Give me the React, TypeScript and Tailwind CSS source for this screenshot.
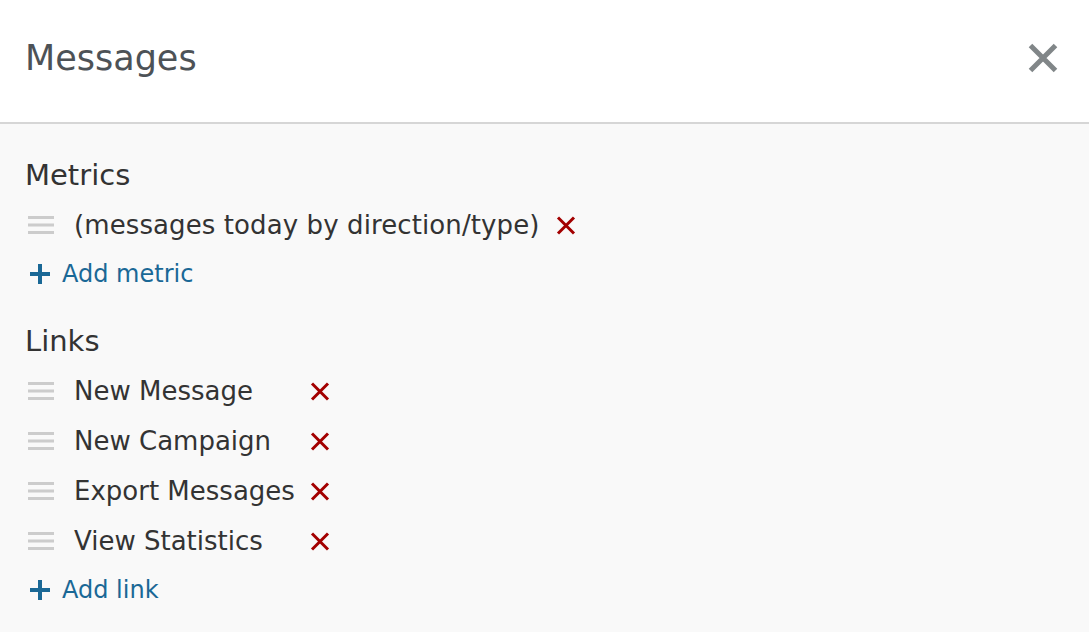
import React from "react";

const font = { fontFamily: '"DejaVu Sans", Verdana, sans-serif' };

function Handle() {
  return (
    <svg width="26" height="18" viewBox="0 0 26 18" className="ml-[3px] shrink-0">
      <rect x="0" y="0" width="26" height="3" fill="#cccccc" />
      <rect x="0" y="7.5" width="26" height="3" fill="#cccccc" />
      <rect x="0" y="15" width="26" height="3" fill="#cccccc" />
    </svg>
  );
}

function RedX() {
  return (
    <svg width="20" height="19" viewBox="0 0 20 19" className="shrink-0">
      <path d="M2 1.5 L18 17.5 M18 1.5 L2 17.5" stroke="#a30000" strokeWidth="3" />
    </svg>
  );
}

function Plus() {
  return (
    <svg width="20" height="20" viewBox="0 0 20 20" className="ml-[5px] shrink-0">
      <path d="M10 0 V20 M0 10 H20" stroke="#1a6896" strokeWidth="4" />
    </svg>
  );
}

function Row({ label, fixed }: { label: string; fixed?: boolean }) {
  return (
    <div className="flex h-[50px] items-center">
      <Handle />
      <span
        className={`ml-[20px] text-[26px] leading-none text-[#333333] ${fixed ? "w-[236px]" : "mr-[17px] tracking-[0.1px]"}`}
      >
        {label}
      </span>
      <RedX />
    </div>
  );
}

function AddRow({ label }: { label: string }) {
  return (
    <div className="flex h-[46px] items-center pt-[2px]">
      <Plus />
      <span className="ml-[12px] text-[24px] leading-none text-[#1a6896]">{label}</span>
    </div>
  );
}

export default function App() {
  return (
    <div className="h-[632px] w-full overflow-hidden bg-[#f9f9f9]" style={font}>
      <div className="flex h-[124px] items-center justify-between border-b-2 border-[#d6d6d6] bg-white pb-[6px] pl-[25px] pr-[31px]">
        <h1 className="text-[35px] font-normal leading-none text-[#4d5256]">Messages</h1>
        <svg width="30" height="30" viewBox="0 0 30 30">
          <path d="M2.5 2.5 L27.5 27.5 M27.5 2.5 L2.5 27.5" stroke="#818688" strokeWidth="5" />
        </svg>
      </div>
      <div className="px-[25px] pt-[26px]">
        <div className="flex h-[50px] items-center text-[29px] leading-none text-[#333333]">Metrics</div>
        <Row label="(messages today by direction/type)" />
        <AddRow label="Add metric" />
        <div className="mt-[20px] flex h-[50px] items-center text-[29px] leading-none text-[#333333]">Links</div>
        <Row label="New Message" fixed />
        <Row label="New Campaign" fixed />
        <Row label="Export Messages" fixed />
        <Row label="View Statistics" fixed />
        <AddRow label="Add link" />
      </div>
    </div>
  );
}
